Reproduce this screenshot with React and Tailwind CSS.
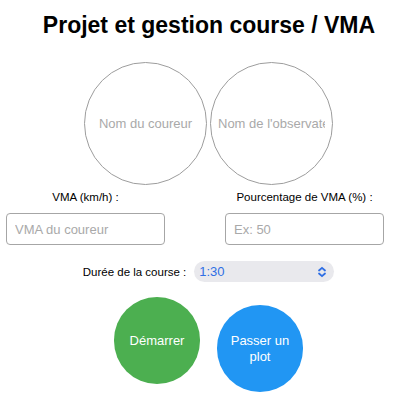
import React from "react";

function UpDown() {
  return (
    <svg width="10" height="12" viewBox="0 0 10 12" fill="none">
      <path d="M2 4.5 L5 1.8 L8 4.5" stroke="#2f6fe4" strokeWidth="1.8" strokeLinecap="round" strokeLinejoin="round" />
      <path d="M2 7.5 L5 10.2 L8 7.5" stroke="#2f6fe4" strokeWidth="1.8" strokeLinecap="round" strokeLinejoin="round" />
    </svg>
  );
}

export default function App() {
  return (
    <div className="w-[400px] h-[400px] overflow-hidden bg-white text-black font-['Liberation_Sans',Arial,sans-serif]">
      <h1 className="mt-[11px] pl-[18px] text-center text-[23px] leading-[28px] font-bold">
        Projet et gestion course / VMA
      </h1>

      <div className="mt-[23px] flex justify-center gap-[3px] pl-[17px]">
        <input
          placeholder="Nom du coureur"
          className="h-[123px] w-[123px] rounded-full border border-[#9d9d9d] px-[7px] text-center text-[13px] outline-none placeholder:text-[#a9a9a9]"
        />
        <input
          placeholder="Nom de l'observateur"
          className="h-[123px] w-[123px] rounded-full border border-[#9d9d9d] px-[7px] text-left text-[13px] outline-none placeholder:text-[#a9a9a9]"
        />
      </div>

      <div className="mt-[4px] flex gap-[60px] pl-[6px]">
        <div className="flex w-[159px] flex-col items-center">
          <label className="text-[11.5px] leading-[16px]">VMA (km/h) :</label>
          <input
            placeholder="VMA du coureur"
            className="mt-[8px] h-[32px] w-[159px] rounded-[4px] border border-[#a6a6a6] px-[8px] text-[13px] outline-none placeholder:text-[#a9a9a9]"
          />
        </div>
        <div className="flex w-[159px] flex-col items-center">
          <label className="text-[11.5px] leading-[16px]">Pourcentage de VMA (%) :</label>
          <input
            placeholder="Ex: 50"
            className="mt-[8px] h-[32px] w-[159px] rounded-[4px] border border-[#a6a6a6] px-[8px] text-[13px] outline-none placeholder:text-[#a9a9a9]"
          />
        </div>
      </div>

      <div className="mt-[16px] flex items-center justify-center gap-[8px] pl-[17px]">
        <span className="text-[11.5px] leading-[16px]">Durée de la course :</span>
        <div className="flex h-[21px] w-[140px] items-center justify-between rounded-full bg-[#e9e9ed] pl-[5px] pr-[7px]">
          <span className="text-[13px] text-[#2f6fe4]">1:30</span>
          <UpDown />
        </div>
      </div>

      <div className="mt-[15px] flex items-start justify-center gap-[17px] pl-[17px]">
        <button className="flex h-[87px] w-[86px] items-center justify-center rounded-full bg-[#4caf50] text-[13px] leading-[16px] text-white">
          Démarrer
        </button>
        <button className="mt-[8px] flex h-[87px] w-[86px] items-center justify-center rounded-full bg-[#2196f3] px-[10px] text-center text-[13px] leading-[16px] text-white">
          Passer un plot
        </button>
      </div>
    </div>
  );
}
